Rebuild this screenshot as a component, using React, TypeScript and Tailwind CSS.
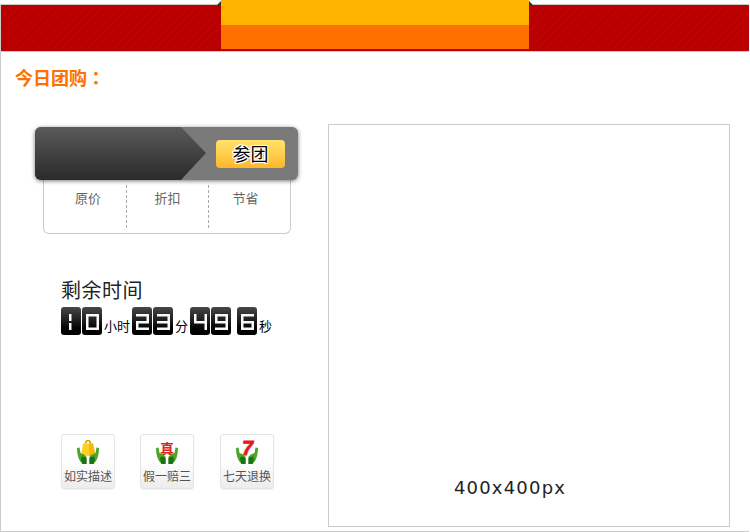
const CJK = "font-['Liberation_Sans','Noto_Sans_CJK_SC',sans-serif]";

// which segments are lit: top, upper-left, upper-right, middle, lower-left, lower-right, bottom
const SEGMENTS: Record<string, number[]> = {
  '0': [1, 1, 1, 0, 1, 1, 1],
  '1': [0, 0, 0, 0, 0, 0, 0],
  '2': [1, 0, 1, 1, 1, 0, 1],
  '3': [1, 0, 1, 1, 0, 1, 1],
  '4': [0, 1, 1, 1, 0, 1, 0],
  '6': [1, 1, 0, 1, 1, 1, 1],
  '9': [1, 1, 1, 1, 0, 1, 1],
};

function FlipDigit({ value }: { value: string }) {
  const s = SEGMENTS[value];
  return (
    <div className="h-[28px] w-[20px] rounded-[3px] bg-gradient-to-b from-[#484848] via-[#1c1c1c] to-black">
      <svg viewBox="0 0 20 28" className="h-full w-full" role="img" aria-label={value}>
        <g fill="#f8f8f8">
          {s[0] === 1 && <rect x="4" y="7" width="13" height="2.5" />}
          {s[1] === 1 && <rect x="4" y="7" width="2.5" height="8" />}
          {s[2] === 1 && <rect x="14.5" y="7" width="2.5" height="8" />}
          {s[3] === 1 && <rect x="4" y="14" width="13" height="2.5" />}
          {s[4] === 1 && <rect x="4" y="15" width="2.5" height="8" />}
          {s[5] === 1 && <rect x="14.5" y="15" width="2.5" height="8" />}
          {s[6] === 1 && <rect x="4" y="20.5" width="13" height="2.5" />}
          {value === '1' && (
            <>
              <rect x="8" y="7" width="2.5" height="7" />
              <rect x="8" y="16" width="2.5" height="7" />
            </>
          )}
        </g>
      </svg>
    </div>
  );
}

function Hands() {
  return (
    <g>
      <path d="M1 8 L3.5 7.5 L4.5 13 Q8 13.5 10.5 16.5 L10.5 24 L6.5 24 Q1 19 1 8Z" fill="#4da526" />
      <path d="M23 8 L20.5 7.5 L19.5 13 Q16 13.5 13.5 16.5 L13.5 24 L17.5 24 Q23 19 23 8Z" fill="#4da526" />
      <path d="M6.5 24 L10.5 24 L10.5 18 Q8.5 16.5 6 16.5 L5 19Z" fill="#1c7018" />
      <path d="M17.5 24 L13.5 24 L13.5 18 Q15.5 16.5 18 16.5 L19 19Z" fill="#1c7018" />
    </g>
  );
}

function BadgeIcon({ kind }: { kind: string }) {
  return (
    <svg viewBox="0 0 24 26" className="h-[26px] w-[24px] overflow-visible">
      {kind === 'bag' && (
        <>
          <path d="M9.5 4 Q9.5 0.5 12 0.5 Q14.5 0.5 14.5 4" fill="none" stroke="#d9a400" strokeWidth="1.5" />
          <path d="M7 3.5 H17 L19 13 Q18 16 12 16 Q6 16 5.5 13Z" fill="#ffd21f" />
          <path d="M13 3.5 H17 L19 13 Q18 16 13 16Z" fill="#f2b90f" />
        </>
      )}
      {kind === 'zhen' && (
        <text x="12" y="14" textAnchor="middle" fontSize="14" fontWeight="700" fill="#d9251c" fontFamily="'Noto Sans CJK SC', sans-serif">
          真
        </text>
      )}
      {kind === 'seven' && (
        <text x="12.5" y="15" textAnchor="middle" fontSize="20" fontWeight="700" fontStyle="italic" fill="#e01c1c" stroke="#e01c1c" strokeWidth="0.8" fontFamily="'Liberation Sans', sans-serif">
          7
        </text>
      )}
      <Hands />
    </svg>
  );
}

function Badge({ kind, label }: { kind: string; label: string }) {
  return (
    <div className="flex h-[55px] w-[54px] flex-col items-center rounded-[3px] border border-[#e4e4e4] bg-gradient-to-b from-white via-white to-[#ececec] pt-[5px] shadow-[0_1px_1px_rgba(0,0,0,0.05)]">
      <BadgeIcon kind={kind} />
      <span className="mt-[3px] whitespace-nowrap text-[12px] leading-[16px] text-[#555]">{label}</span>
    </div>
  );
}

export default function App() {
  return (
    <div className={`relative h-[532px] w-[749px] overflow-hidden bg-white pt-[4px] ${CJK}`}>
      {/* top tab sits over the red bar */}
      <div className="absolute left-[221px] top-0 z-10 h-[49px] w-[308px]">
        <div className="h-[25px] bg-[#ffb400]" />
        <div className="h-[24px] bg-[#ff7000]" />
      </div>
      <div className="absolute left-[217px] top-[1px] h-0 w-0 border-b-[4px] border-l-[4px] border-b-[#333] border-l-transparent" />
      <div className="absolute left-[529px] top-[1px] h-0 w-0 border-b-[4px] border-r-[4px] border-b-[#333] border-r-transparent" />

      <div className="flex h-[528px] flex-col border-b border-l border-[#ccc]">
        <div className="h-[48px] border-y border-[#ccc] bg-[#bb0000] bg-[repeating-linear-gradient(135deg,#bd0000_0,#bd0000_4px,#b40000_4px,#b40000_6px)]" />

        <h1 className="ml-[14px] mt-[14px] h-[22px] text-[18px] font-bold leading-[22px] text-[#ff7000]">
          今日团购<span className="font-['Noto_Sans_CJK_TC',sans-serif]">：</span>
        </h1>

        <div className="mt-[36px] flex">
          <div className="ml-[34px] w-[263px] pt-[3px]">
            <div className="relative z-10 flex h-[53px] items-center justify-end overflow-hidden rounded-[6px] bg-[#7a7a7a] pr-[13px] pt-[1px] shadow-[0_1px_4px_rgba(0,0,0,0.55)]">
              <div className="absolute left-0 top-0 h-full w-[171px] bg-gradient-to-b from-[#5a5a5a] to-[#2b2b2b] [clip-path:polygon(0_0,146px_0,171px_26px,146px_100%,0_100%)]" />
              <button className="relative flex h-[28px] w-[69px] items-center justify-center rounded-[4px] bg-gradient-to-b from-[#ffe36b] to-[#fdb726] pt-[2px] text-[18px] font-normal text-black [text-shadow:1px_0_0_#fff,-1px_0_0_#fff,0_1px_0_#fff,0_-1px_0_#fff,1px_1px_0_#fff,-1px_-1px_0_#fff,1px_-1px_0_#fff,-1px_1px_0_#fff]">
                参团
              </button>
            </div>

            <div className="ml-[8px] flex h-[54px] w-[248px] rounded-b-[6px] border border-t-0 border-[#ccc] py-[5px] text-[13px] leading-[18px] text-[#666]">
              <div className="w-[83px] border-r border-dashed border-[#aaa] pl-[6px] pt-[5px] text-center">原价</div>
              <div className="w-[82px] border-r border-dashed border-[#aaa] pt-[5px] text-center">折扣</div>
              <div className="flex-1 pr-[8px] pt-[5px] text-center">节省</div>
            </div>

            <div className="ml-[26px] mt-[44px]">
              <div className="text-[20px] leading-[26px] tracking-[0.5px] text-[#222]">剩余时间</div>
              <div className="mt-[3px] flex items-end text-[13px] leading-[16px] text-black">
                <FlipDigit value="1" />
                <div className="ml-px"><FlipDigit value="0" /></div>
                <span className="ml-[2px] mr-[2px] whitespace-nowrap">小时</span>
                <FlipDigit value="2" />
                <div className="ml-px"><FlipDigit value="3" /></div>
                <span className="ml-[2px] mr-[2px]">分</span>
                <FlipDigit value="4" />
                <div className="ml-px"><FlipDigit value="9" /></div>
                <div className="ml-[6px]"><FlipDigit value="6" /></div>
                <span className="ml-[2px]">秒</span>
              </div>
            </div>

            <div className="ml-[26px] mt-[99px] flex">
              <Badge kind="bag" label="如实描述" />
              <div className="ml-[25px]"><Badge kind="zhen" label="假一赔三" /></div>
              <div className="ml-[26px]"><Badge kind="seven" label="七天退换" /></div>
            </div>
          </div>

          <div className="ml-[30px] flex h-[403px] w-[402px] flex-col items-center justify-end border border-[#ccc] pb-[26px] pr-[38px]">
            <span className="font-['DejaVu_Sans',sans-serif] text-[18px] leading-[24px] tracking-[1.2px] text-[#222]">400x400px</span>
          </div>
        </div>
      </div>
    </div>
  );
}
